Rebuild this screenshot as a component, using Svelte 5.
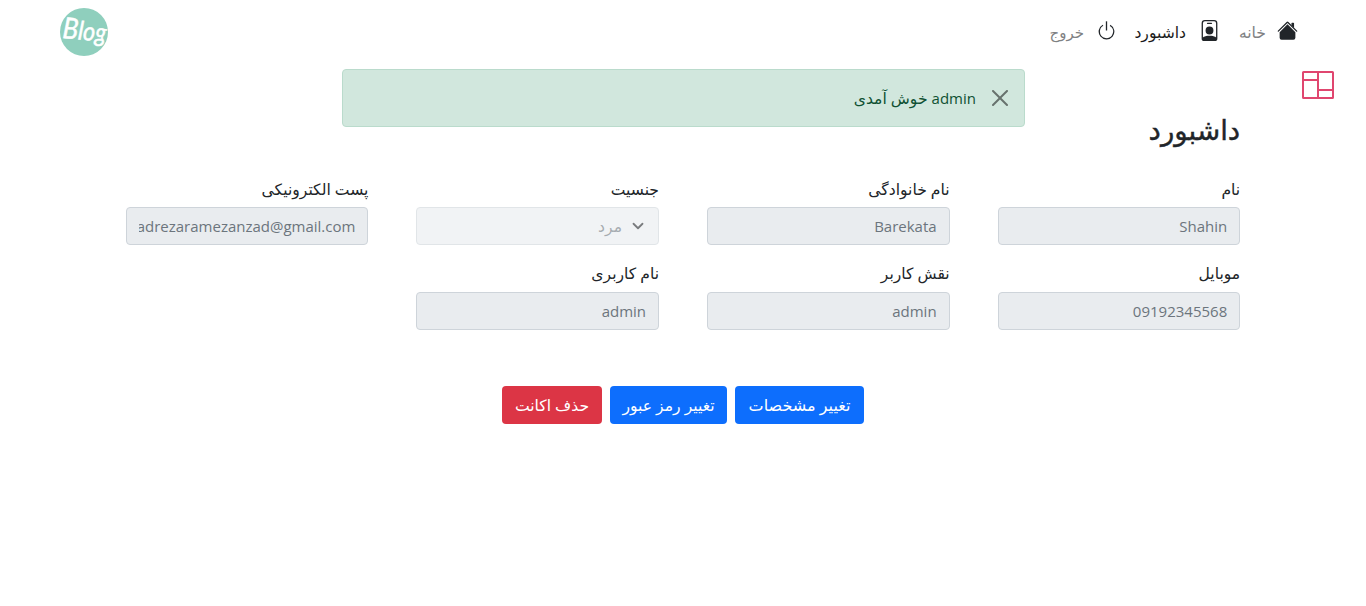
<script>
  const fields = [
    { label: 'نام', value: 'Shahin' },
    { label: 'نام خانوادگی', value: 'Barekata' },
    { label: 'جنسیت', value: 'مرد', select: true },
    { label: 'پست الکترونیکی', value: 'adrezaramezanzad@gmail.com' },
    { label: 'موبایل', value: '09192345568' },
    { label: 'نقش کاربر', value: 'admin' },
    { label: 'نام کاربری', value: 'admin' }
  ];
</script>

<div class="page" dir="rtl">
  <header>
    <nav>
      <svg class="ic" viewBox="0 0 16 16"><path d="m8 3.293 6 6V13.5a1.5 1.5 0 0 1-1.5 1.5h-9A1.5 1.5 0 0 1 2 13.5V9.293l6-6zm5-.793V6l-2-2V2.5a.5.5 0 0 1 .5-.5h1a.5.5 0 0 1 .5.5z"/><path d="M7.293 1.5a1 1 0 0 1 1.414 0l6.647 6.646a.5.5 0 0 1-.708.708L8 2.207 1.354 8.854a.5.5 0 1 1-.708-.708L7.293 1.5z"/></svg>
      <a class="home" href="#home"><span>خانه</span></a>
      <svg class="ic" viewBox="0 0 16 16"><path d="M6.5 2a.5.5 0 0 0 0 1h3a.5.5 0 0 0 0-1h-3zM11 8a3 3 0 1 1-6 0 3 3 0 0 1 6 0z"/><path d="M4.500 0A2.500 2.500 0 0 0 2 2.500V14a2 2 0 0 0 2 2h8a2 2 0 0 0 2-2V2.500A2.500 2.500 0 0 0 11.500 0h-7zM3 2.500A1.500 1.500 0 0 1 4.500 1h7A1.500 1.500 0 0 1 13 2.500v10.795a4.200 4.200 0 0 0-.776-.492C11.392 12.387 10.063 12 8 12s-3.392.387-4.224.803a4.200 4.200 0 0 0-.776.492V2.500z"/></svg>
      <a class="dash" href="#dashboard"><span>داشبورد</span></a>
      <svg class="ic" viewBox="0 0 16 16"><path d="M7.500 1v7h1V1h-1z"/><path d="M3 8.812a4.999 4.999 0 0 1 2.578-4.375l-.485-.874A6 6 0 1 0 11 3.616l-.501.865A5 5 0 1 1 3 8.812z"/></svg>
      <a class="exit" href="#logout"><span>خروج</span></a>
    </nav>
    <svg class="logo" viewBox="0 0 48 48">
      <circle cx="24" cy="24" r="24" fill="#8fcfbd"/>
      <text x="2.500" y="32" direction="ltr" transform="rotate(5 24 24)" textLength="44" lengthAdjust="spacingAndGlyphs"><tspan class="cap">B</tspan>log</text>
    </svg>
  </header>

  <svg class="layout-icon" viewBox="0 0 34 30" fill="none" stroke="#e0466f" stroke-width="2"><rect x="2" y="2" width="30" height="26" rx=".5"/><path d="M17 2v26M2 10h15M17 20h15"/></svg>

  <div class="alert">
    <svg viewBox="0 0 16 16"><path d="M.293.293a1 1 0 0 1 1.414 0L8 6.586 14.293.293a1 1 0 1 1 1.414 1.414L9.414 8l6.293 6.293a1 1 0 0 1-1.414 1.414L8 9.414l-6.293 6.293a1 1 0 0 1-1.414-1.414L6.586 8 .293 1.707a1 1 0 0 1 0-1.414z"/></svg>
    <p><bdi class="lat">admin</bdi> <span>خوش آمدی</span></p>
  </div>

  <main>
    <h1>داشبورد</h1>
    <div class="grid">
      {#each fields as f}
        <div class="field">
          <div class="label">{f.label}</div>
          <div class="control" class:select={f.select}>
            {#if f.select}
              <svg viewBox="0 0 16 16"><path d="m2 5 6 6 6-6"/></svg>
              <span>{f.value}</span>
            {:else}
              <div class="clip"><bdi class="lat">{f.value}</bdi></div>
            {/if}
          </div>
        </div>
      {/each}
    </div>
    <div class="buttons">
      <button class="b1">تغییر مشخصات</button>
      <button class="b2">تغییر رمز عبور</button>
      <button class="b3">حذف اکانت</button>
    </div>
  </main>
</div>

<style>
  :global(body) { background: #fff; }
  .page { position: relative; height: 606px; overflow: hidden; font: 15.6px/24px "Open Sans", "DejaVu Sans", sans-serif; color: #212529; }
  header { display: flex; justify-content: space-between; height: 64px; padding: 0 68px 0 60px; }
  nav { display: flex; align-items: flex-start; padding-top: 20px; }
  nav a { display: block; white-space: nowrap; text-decoration: none; color: #7f8183; }
  .ic { width: 21px; height: 21px; fill: #212529; flex: none; }
  .home { width: 27px; margin: 0 11px 0 19px; }
  .dash { width: 52px; margin: 0 13px 0 17px; }
  nav .dash { color: #1a1a1a; }
  .exit { width: 36px; margin-right: 12px; font-size: 15px; }
  .logo { width: 48px; height: 48px; margin-top: 8px; overflow: visible; }
  .logo text { font: italic 400 26px "Lato", sans-serif; fill: #fff; stroke: #fff; stroke-width: .5; }
  .logo .cap { font-size: 29px; }
  .layout-icon { position: absolute; left: 1301px; top: 70px; width: 34px; height: 30px; }
  .alert { position: absolute; left: 342px; top: 69px; box-sizing: border-box; width: 683px; height: 58px; border: 1px solid #badbcc; border-radius: 4px; background: #d1e7dd; color: #0f5132; display: flex; padding: 16px; align-items: center; }
  .alert svg { width: 16px; height: 16px; margin-left: 16px; fill: #000; opacity: .5; }
  .alert p { margin: 0; }
  .lat { font-family: "Open Sans", sans-serif; font-size: 15px; }
  main { padding: 48px 125.8px 0; }
  h1 { margin: 0; font-size: 27.7px; line-height: 34px; font-weight: 500; -webkit-text-stroke: .4px #212529; }
  .grid { display: grid; grid-template-columns: repeat(4, 242.6px); column-gap: 48px; row-gap: 15px; margin-top: 29px; }
  .label { box-sizing: border-box; height: 24px; padding-top: 2px; margin-bottom: 8px; white-space: nowrap; }
  .field:nth-child(n + 5) .label { padding-top: 1px; }
  .control { box-sizing: border-box; height: 38px; border: 1px solid #ced4da; border-radius: 4px; background: #e9ecef; padding: 6px 12px; color: #6c757d; }
  .clip { overflow: hidden; white-space: nowrap; }
  .select { display: flex; align-items: center; opacity: .6; padding-right: 12px; }
  .select svg { width: 16px; height: 12px; margin-left: 8px; fill: none; stroke: #212529; stroke-width: 2.400; stroke-linecap: round; stroke-linejoin: round; }
  .buttons { display: flex; justify-content: center; gap: 8px; margin-top: 56px; }
  button { height: 38px; border: 0; border-radius: 4px; padding: 0; color: #fff; background: #0d6efd; font: inherit; white-space: nowrap; }
  .b1 { width: 129px; font-size: 16px; } .b2 { width: 117px; } .b3 { width: 100px; background: #dc3545; }
</style>
